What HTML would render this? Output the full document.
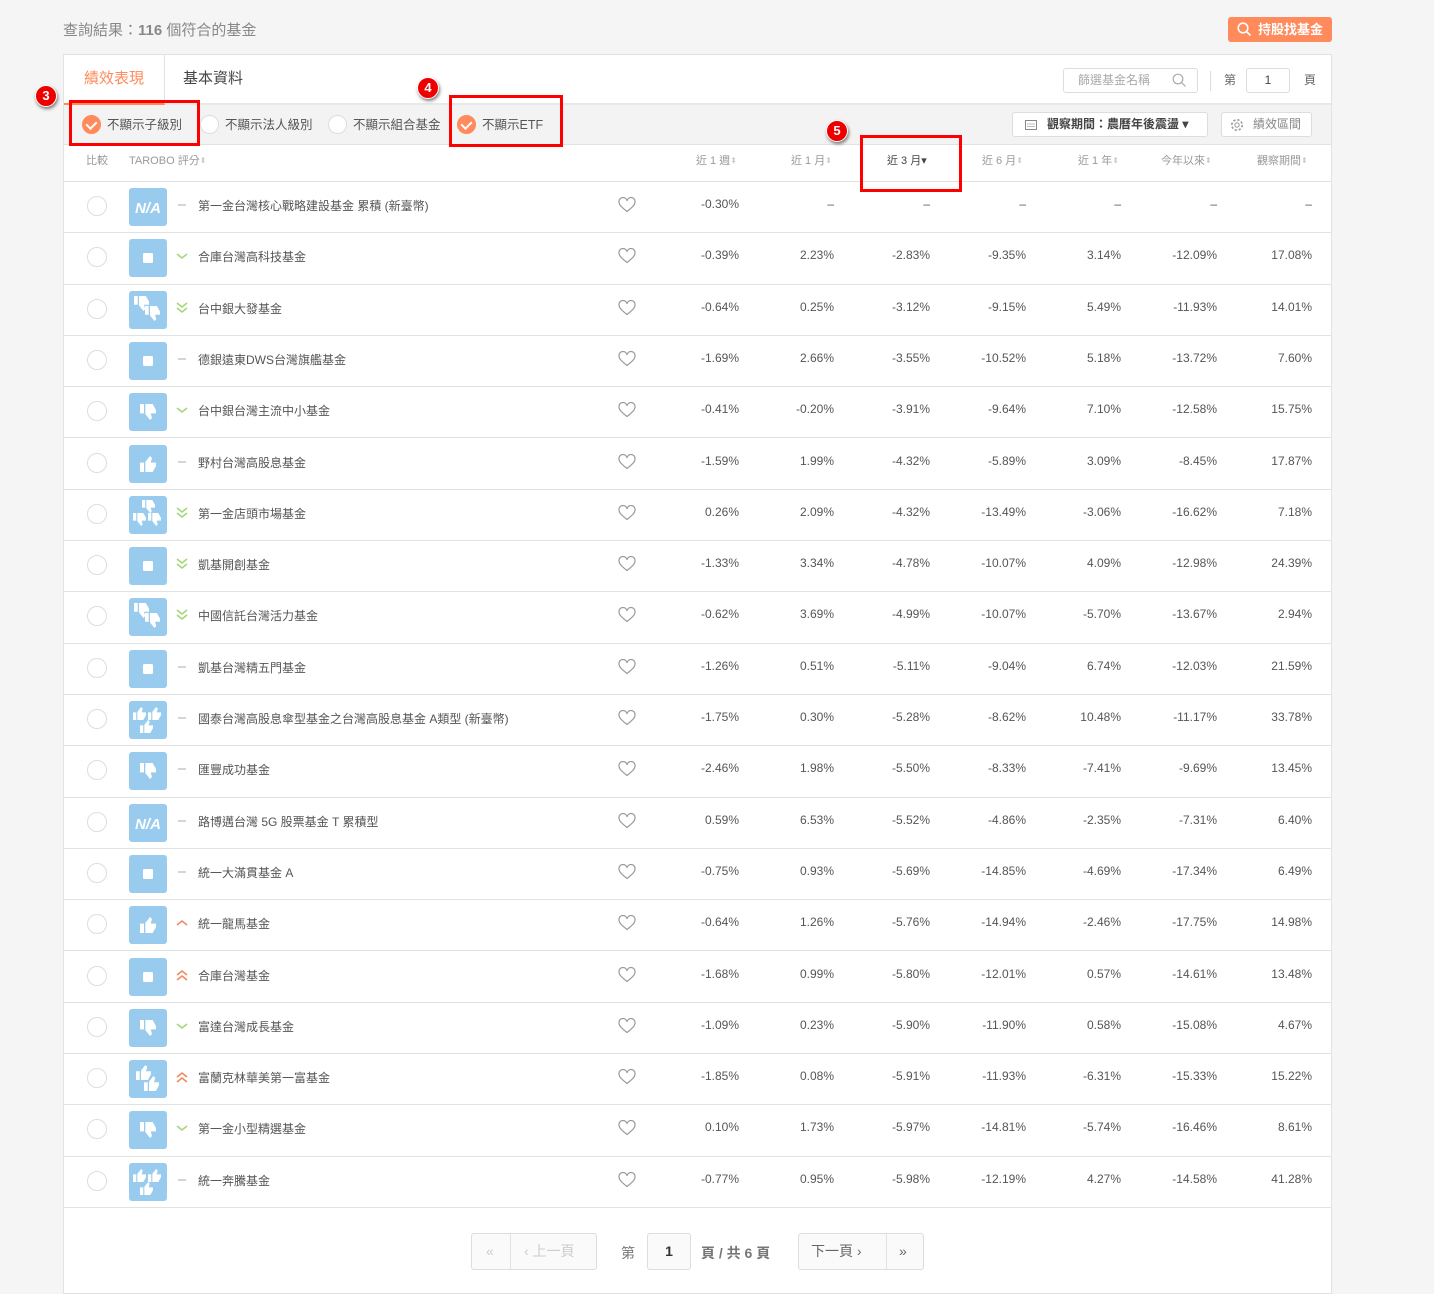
<!DOCTYPE html>
<html><head><meta charset="utf-8"><style>
*{box-sizing:border-box;margin:0;padding:0}
body{width:1434px;height:1287px;background:#f5f5f5;font-family:"Liberation Sans","Noto Sans CJK TC",sans-serif;color:#555;position:relative;overflow:hidden}
.abs{position:absolute}
.title{left:63px;top:19px;font-size:15px;color:#888}
.title b{color:#888}
.btn{left:1228px;top:17px;width:104px;height:25px;background:#ff8a5c;border-radius:3px;color:#fff;font-size:13px;font-weight:bold;line-height:25px;padding-left:30px}
.box{left:63px;top:54px;width:1269px;height:1240px;background:#fff;border:1px solid #e2e2e2}
.tabs{left:0;top:0;width:1267px;height:50px;border-bottom:2px solid #e8e8e8}
.tab1{left:0;top:0;width:101px;height:50px;border-right:1px solid #e2e2e2;border-bottom:2px solid #ff8a5c;color:#ff8a5c;font-size:15px;text-align:center;line-height:48px}
.tab2{left:119px;top:0;font-size:15px;line-height:48px;color:#444}
.filter{left:0;top:50px;width:1267px;height:40px;background:#f3f3f3;border-bottom:1px solid #e2e2e2}
.opt{top:0;height:40px;line-height:40px;font-size:12.5px;color:#555}
.rad{display:inline-block;width:19px;height:19px;border-radius:50%;border:1px solid #ddd;background:#fff;vertical-align:middle;margin-right:6px;position:relative;top:-1px}
.rad.on{background:#ff8a5c;border-color:#ff8a5c}
.rad.on:after{content:"";position:absolute;left:5px;top:3px;width:5px;height:8px;border:solid #fff;border-width:0 2px 2px 0;transform:rotate(45deg)}
.sbtn{top:7px;height:25px;border:1px solid #ddd;border-radius:3px;background:#fff;font-size:12px;line-height:23px}
.hdr{left:0;top:90px;width:1267px;height:37px;border-bottom:1px solid #e2e2e2;font-size:11px;color:#999;line-height:32px}
.hdr span{position:absolute}
.row{position:absolute;left:0;width:1267px;height:51.3px;border-bottom:1px solid #e2e2e2;font-size:12px;color:#555}
.row .c{position:absolute;left:23px;top:14px;width:20px;height:20px;border-radius:50%;border:1px solid #ddd}
.row .ic{position:absolute;left:65px;top:6px;width:38px;height:38px;border-radius:3px;background:#99cbee;color:#fff}
.row .tr{position:absolute;left:111px;top:13px;width:14px;height:20px}
.row .nm{position:absolute;left:134px;top:15px}
.row .hrt{position:absolute;left:554px;top:15px}
.row .v{position:absolute;top:15px;width:80px;text-align:right}
.sort{font-size:8px;color:#ccc}
.pg{top:1233px;height:37px;border:1px solid #ddd;border-radius:3px;background:#fafafa;font-size:14px;line-height:35px;color:#ccc}
.red{position:absolute;border:3px solid #f00}
.num{position:absolute;width:22px;height:22px;border-radius:50%;background:#e00;color:#fff;font-size:13px;font-weight:bold;text-align:center;line-height:20px;border:1px solid #fff;box-shadow:1px 2px 3px rgba(0,0,0,.5)}
</style></head><body>
<svg width="0" height="0" style="position:absolute">
<defs>
<symbol id="td" viewBox="0 0 12 12"><path d="M0 0h3v7H0zM4 0h5.5l2.5 4.5V7H8l1 3.5-1.5 1.5L4 7.5z" fill="#fff"/></symbol>
<symbol id="tu" viewBox="0 0 12 12"><path d="M0 5h3v7H0zM4 4.5L7.5 0 9 1.5 8 5h4v2.5L9.5 12H4z" fill="#fff"/></symbol>
<symbol id="dash" viewBox="0 0 14 20"><path d="M3 10h8" stroke="#cfd6dd" stroke-width="2"/></symbol>
<symbol id="d1" viewBox="0 0 14 20"><path d="M2 8l5 4 5-4" stroke="#a6d67a" stroke-width="1.6" fill="none"/></symbol>
<symbol id="d2" viewBox="0 0 14 20"><path d="M2 5l5 4 5-4M2 10l5 4 5-4" stroke="#a6d67a" stroke-width="1.6" fill="none"/></symbol>
<symbol id="u1" viewBox="0 0 14 20"><path d="M2 12l5-4 5 4" stroke="#f08a60" stroke-width="1.6" fill="none"/></symbol>
<symbol id="u2" viewBox="0 0 14 20"><path d="M2 10l5-4 5 4M2 15l5-4 5 4" stroke="#f08a60" stroke-width="1.6" fill="none"/></symbol>
<symbol id="hrt" viewBox="0 0 18 16"><path d="M9 14.5C4 10.5 1 8 1 5a4 4 0 0 1 8-1 4 4 0 0 1 8 1c0 3-3 5.5-8 9.5z" stroke="#999" stroke-width="1.2" fill="none"/></symbol>
<symbol id="sq" viewBox="0 0 38 38"><rect x="14" y="14" width="10" height="10" rx="1.5" fill="#fff"/></symbol>
<symbol id="na" viewBox="0 0 38 38"><text x="19" y="25" text-anchor="middle" font-family="Liberation Sans" font-weight="bold" font-style="italic" font-size="15" fill="#fff">N/A</text></symbol>
<symbol id="dn1" viewBox="0 0 38 38"><use href="#td" x="11" y="11" width="16" height="16"/></symbol>
<symbol id="dn2" viewBox="0 0 38 38"><use href="#td" x="5" y="5" width="15" height="15"/><use href="#td" x="16" y="15" width="15" height="15"/></symbol>
<symbol id="dn3" viewBox="0 0 38 38"><use href="#td" x="13" y="4" width="13" height="13"/><use href="#td" x="4" y="17" width="13" height="13"/><use href="#td" x="19" y="17" width="13" height="13"/></symbol>
<symbol id="up1" viewBox="0 0 38 38"><use href="#tu" x="11" y="11" width="16" height="16"/></symbol>
<symbol id="up2" viewBox="0 0 38 38"><use href="#tu" x="7" y="5" width="15" height="15"/><use href="#tu" x="15" y="16" width="15" height="15"/></symbol>
<symbol id="up3" viewBox="0 0 38 38"><use href="#tu" x="4" y="6" width="13" height="13"/><use href="#tu" x="19" y="6" width="13" height="13"/><use href="#tu" x="11" y="19" width="13" height="13"/></symbol>
</defs></svg>

<div class="abs title">查詢結果：<b>116</b> 個符合的基金</div>
<div class="abs btn"><svg class="abs" style="left:9px;top:5px" width="15" height="15" viewBox="0 0 15 15"><circle cx="6" cy="6" r="4.8" stroke="#fff" stroke-width="1.6" fill="none"/><path d="M9.5 9.5l4 4" stroke="#fff" stroke-width="1.6"/></svg>持股找基金</div>

<div class="abs box">
 <div class="abs tabs">
  <div class="abs tab1">績效表現</div>
  <div class="abs tab2">基本資料</div>
  <div class="abs" style="left:999px;top:13px;width:135px;height:25px;border:1px solid #ddd;border-radius:3px;font-size:12px;color:#aaa;line-height:23px;padding-left:14px">篩選基金名稱<svg class="abs" style="left:108px;top:4px" width="15" height="15" viewBox="0 0 15 15"><circle cx="6" cy="6" r="4.8" stroke="#aaa" stroke-width="1.2" fill="none"/><path d="M9.5 9.5l4 4" stroke="#aaa" stroke-width="1.2"/></svg></div>
  <div class="abs" style="left:1146px;top:16px;width:1px;height:20px;background:#ddd"></div>
  <div class="abs" style="left:1160px;top:16px;font-size:12px;color:#666">第</div>
  <div class="abs" style="left:1182px;top:13px;width:44px;height:25px;border:1px solid #ddd;border-radius:3px;font-size:12px;text-align:center;line-height:23px;color:#444">1</div>
  <div class="abs" style="left:1240px;top:16px;font-size:12px;color:#666">頁</div>
 </div>
 <div class="abs filter">
  <div class="abs opt" style="left:18px"><span class="rad on"></span>不顯示子級別</div>
  <div class="abs opt" style="left:136px"><span class="rad"></span>不顯示法人級別</div>
  <div class="abs opt" style="left:264px"><span class="rad"></span>不顯示組合基金</div>
  <div class="abs opt" style="left:393px"><span class="rad on"></span>不顯示ETF</div>
  <div class="abs sbtn" style="left:948px;width:196px;padding-left:34px;font-weight:bold;color:#444"><svg class="abs" style="left:12px;top:7px" width="12" height="10" viewBox="0 0 12 10"><rect x=".5" y=".5" width="11" height="9" stroke="#888" fill="none"/><path d="M2 4h8M2 6.5h8" stroke="#bbb"/></svg>觀察期間：農曆年後震盪 ▾</div>
  <div class="abs sbtn" style="left:1157px;width:91px;padding-left:31px;color:#888"><svg class="abs" style="left:8px;top:5px" width="14" height="14" viewBox="0 0 14 14"><circle cx="7" cy="7" r="2.2" stroke="#999" fill="none"/><circle cx="7" cy="7" r="5.2" stroke="#999" stroke-dasharray="2.3 1.8" stroke-width="1.6" fill="none"/></svg>績效區間</div>
 </div>
 <div class="abs hdr">
  <span style="left:22px">比較</span>
  <span style="left:65px">TAROBO 評分<span class="sort">⬍</span></span>
  <span style="left:632px">近 1 週<span class="sort">⬍</span></span>
  <span style="left:727px">近 1 月<span class="sort">⬍</span></span>
  <span style="left:823px;color:#444">近 3 月▾</span>
  <span style="left:918px">近 6 月<span class="sort">⬍</span></span>
  <span style="left:1014px">近 1 年<span class="sort">⬍</span></span>
  <span style="left:1097px">今年以來<span class="sort">⬍</span></span>
  <span style="left:1193px">觀察期間<span class="sort">⬍</span></span>
 </div>
 <div class="abs" style="left:0;top:127px;width:1267px">
 <div class="row" style="top:0"><i class="c"></i><svg class="ic"><use href="#na"/></svg><svg class="tr"><use href="#dash"/></svg><span class="nm">第一金台灣核心戰略建設基金 累積 (新臺幣)</span><svg class="hrt" width="18" height="16"><use href="#hrt"/></svg><span class="v" style="left:595px">-0.30%</span><span class="v" style="left:690px">–</span><span class="v" style="left:786px">–</span><span class="v" style="left:882px">–</span><span class="v" style="left:977px">–</span><span class="v" style="left:1073px">–</span><span class="v" style="left:1168px">–</span></div>
 </div>
 <div id="rows"></div>
 <div class="abs" style="left:0;top:1152px;width:1267px;height:1px;background:#e2e2e2"></div>
</div>

<div class="abs pg" style="left:471px;width:126px"><span class="abs" style="left:14px">«</span><span class="abs" style="left:38px;top:0;width:1px;height:35px;background:#e2e2e2"></span><span class="abs" style="left:52px">‹ 上一頁</span></div>
<div class="abs" style="left:621px;top:1243px;font-size:14px;color:#777">第</div>
<div class="abs pg" style="left:647px;width:44px;text-align:center;color:#333;font-weight:bold;background:#fafafa">1</div>
<div class="abs" style="left:701px;top:1243px;font-size:14px;color:#777;font-weight:bold">頁 / 共 6 頁</div>
<div class="abs pg" style="left:798px;width:126px;color:#666"><span class="abs" style="left:12px">下一頁 ›</span><span class="abs" style="left:87px;top:0;width:1px;height:35px;background:#e2e2e2"></span><span class="abs" style="left:100px">»</span></div>

<div class="red" style="left:69px;top:100px;width:131px;height:46px"></div>
<div class="red" style="left:449px;top:95px;width:114px;height:52px"></div>
<div class="red" style="left:860px;top:135px;width:102px;height:57px"></div>
<div class="num" style="left:35px;top:85px">3</div>
<div class="num" style="left:417px;top:77px">4</div>
<div class="num" style="left:826px;top:120px">5</div>

<script>
var d=[
["sq","d1","合庫台灣高科技基金","-0.39% 2.23% -2.83% -9.35% 3.14% -12.09% 17.08%"],
["dn2","d2","台中銀大發基金","-0.64% 0.25% -3.12% -9.15% 5.49% -11.93% 14.01%"],
["sq","dash","德銀遠東DWS台灣旗艦基金","-1.69% 2.66% -3.55% -10.52% 5.18% -13.72% 7.60%"],
["dn1","d1","台中銀台灣主流中小基金","-0.41% -0.20% -3.91% -9.64% 7.10% -12.58% 15.75%"],
["up1","dash","野村台灣高股息基金","-1.59% 1.99% -4.32% -5.89% 3.09% -8.45% 17.87%"],
["dn3","d2","第一金店頭市場基金","0.26% 2.09% -4.32% -13.49% -3.06% -16.62% 7.18%"],
["sq","d2","凱基開創基金","-1.33% 3.34% -4.78% -10.07% 4.09% -12.98% 24.39%"],
["dn2","d2","中國信託台灣活力基金","-0.62% 3.69% -4.99% -10.07% -5.70% -13.67% 2.94%"],
["sq","dash","凱基台灣精五門基金","-1.26% 0.51% -5.11% -9.04% 6.74% -12.03% 21.59%"],
["up3","dash","國泰台灣高股息傘型基金之台灣高股息基金 A類型 (新臺幣)","-1.75% 0.30% -5.28% -8.62% 10.48% -11.17% 33.78%"],
["dn1","dash","匯豐成功基金","-2.46% 1.98% -5.50% -8.33% -7.41% -9.69% 13.45%"],
["na","dash","路博邁台灣 5G 股票基金 T 累積型","0.59% 6.53% -5.52% -4.86% -2.35% -7.31% 6.40%"],
["sq","dash","統一大滿貫基金 A","-0.75% 0.93% -5.69% -14.85% -4.69% -17.34% 6.49%"],
["up1","u1","統一龍馬基金","-0.64% 1.26% -5.76% -14.94% -2.46% -17.75% 14.98%"],
["sq","u2","合庫台灣基金","-1.68% 0.99% -5.80% -12.01% 0.57% -14.61% 13.48%"],
["dn1","d1","富達台灣成長基金","-1.09% 0.23% -5.90% -11.90% 0.58% -15.08% 4.67%"],
["up2","u2","富蘭克林華美第一富基金","-1.85% 0.08% -5.91% -11.93% -6.31% -15.33% 15.22%"],
["dn1","d1","第一金小型精選基金","0.10% 1.73% -5.97% -14.81% -5.74% -16.46% 8.61%"],
["up3","dash","統一奔騰基金","-0.77% 0.95% -5.98% -12.19% 4.27% -14.58% 41.28%"]];
var L=[595,690,786,882,977,1073,1168],h='';
d.forEach(function(r,i){var v=r[3].split(' ');h+='<div class="row" style="top:'+(127+51.3*(i+1))+'px"><i class="c"></i><svg class="ic"><use href="#'+r[0]+'"/></svg><svg class="tr"><use href="#'+r[1]+'"/></svg><span class="nm">'+r[2]+'</span><svg class="hrt" width="18" height="16"><use href="#hrt"/></svg>';v.forEach(function(x,j){h+='<span class="v" style="left:'+L[j]+'px">'+x+'</span>'});h+='</div>'});
document.getElementById('rows').outerHTML=h;
</script>
</body></html>
